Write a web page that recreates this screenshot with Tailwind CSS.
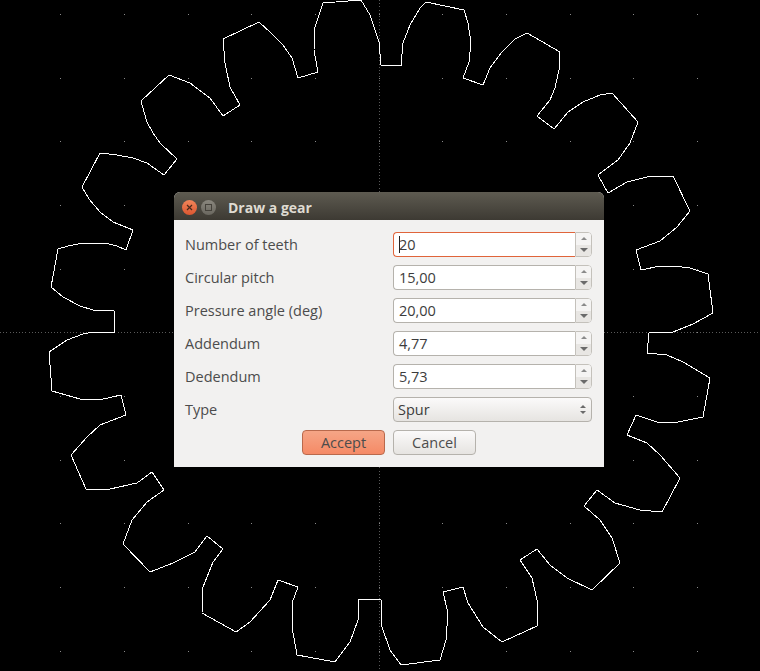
<!DOCTYPE html>
<html lang="en">
<head>
    <meta charset="UTF-8">
    <title>Draw a gear</title>
    <script src="https://cdn.jsdelivr.net/npm/@tailwindcss/browser@4"></script>
</head>
<body class="bg-black">
    <div class="relative w-[760px] h-[671px] overflow-hidden bg-black font-['Open_Sans',sans-serif]">
        <!-- CAD canvas -->
        <svg class="absolute inset-0" width="760" height="671" viewBox="0 0 760 671" fill="none" shape-rendering="crispEdges">
            <path id="grid" stroke="#8a8a8a" stroke-width="1"></path>
            <path d="M0 332.5H760" stroke="#5a5a5a" stroke-dasharray="1 2.18"></path>
            <path d="M379.5 0V671" stroke="#5a5a5a" stroke-dasharray="1 2.18"></path>
            <path stroke="#fff" stroke-width="1" d="M114 332 114 311 93 310 80 306 63 297 51 287 58 249 68 246 83 243 105 243 117 246 126 250 133 230 113 222 100 212 89 199 82 187 100 153 117 155 133 158 147 163 164 175 177 159 160 143 153 133 147 122 141 101 169 75 190 83 210 98 223 116 240 105 230 87 225 63 223 39 259 22 270 32 283 45 292 58 298 78 318 72 314 50 315 27 323 3 361 0 370 15 379 42 381 65 401 66 403 43 410 25 420 8 426 2 464 10 468 23 471 43 469 62 463 78 483 85 490 68 502 52 515 39 527 33 560 52 559 70 555 88 550 100 537 116 554 129 568 112 583 102 600 95 612 93 638 122 630 143 618 160 598 175 608 193 627 182 647 177 673 176 690 211 677 227 660 241 636 250 641 270 660 266 673 266 690 268 708 274 713 313 693 324 673 332 649 333 647 353 667 355 683 362 710 378 703 417 678 422 657 422 636 415 627 435 647 443 660 455 680 478 662 512 640 510 615 503 597 490 584 506 600 520 612 538 620 563 592 590 567 578 550 565 537 549 520 560 532 578 537 600 537 626 502 642 483 627 468 603 463 587 443 592 448 613 446 640 440 660 401 665 390 650 382 627 381 600 359 599 358 620 350 642 335 662 297 655 292 627 292 603 298 587 278 580 270 600 250 622 236 632 202 613 203 587 213 562 223 549 207 536 195 552 173 563 150 572 123 544 132 520 147 502 164 490 152 472 137 483 110 489 86 489 71 455 87 437 100 425 126 415 121 395 99 400 80 399 52 391 49 352 67 340 83 334 93 332Z"></path>
        </svg>

        <!-- Dialog -->
        <div class="absolute left-[174px] top-[192px] w-[430px] h-[275px] flex flex-col bg-[#f2f1f0] rounded-t-[6px]">
            <div class="h-[28px] flex items-center rounded-t-[6px] bg-gradient-to-b from-[#5e5b51] to-[#3d3a33]">
                <div class="ml-[8px] w-[15px] h-[15px] rounded-full flex items-center justify-center bg-gradient-to-b from-[#f2855a] to-[#dc5630] mt-[2px]">
                    <svg width="7" height="7" viewBox="0 0 7 7" fill="none"><path d="M1 1 6 6M6 1 1 6" stroke="#4a2a1c" stroke-width="1.2"></path></svg>
                </div>
                <div class="ml-[4px] w-[15px] h-[15px] rounded-full flex items-center justify-center bg-gradient-to-b from-[#8a877e] to-[#6a675f] mt-[2px]">
                    <div class="w-[7px] h-[7px] border border-[#45423b]"></div>
                </div>
                <span class="ml-[12px] mt-[2px] text-[14px] font-bold text-[#dfdbd2]">Draw a gear</span>
            </div>

            <div class="flex-1 flex flex-col gap-[8px] pt-[12px] pl-[11px] pr-[12px] text-[14.5px] text-[#4c4c4c]">
                <div class="h-[25px] flex items-center">
                    <span class="w-[208px]">Number of teeth</span>
                    <div class="flex-1 h-[25px] flex bg-white rounded-[4px]">
                        <div class="relative flex-1 flex items-center pl-[5px] rounded-l-[4px] border border-r-0 border-[#e0643a] text-[#3c3c3c]">
                            <span class="absolute left-[5px] top-[3px] w-px h-[17px] bg-[#222]"></span>20
                        </div>
                        <div class="w-[17px] flex flex-col rounded-r-[4px] overflow-hidden border border-[#c4c1bb]">
                            <div class="flex-1 flex items-center justify-center bg-[#f5f4f3]"><div class="w-0 h-0 border-x-[3px] border-x-transparent border-b-[3px] border-b-[#8a8a8a]"></div></div>
                            <div class="flex-1 flex items-center justify-center bg-[#e8e6e3]"><div class="w-0 h-0 border-x-[4px] border-x-transparent border-t-[4px] border-t-[#6a6a6a]"></div></div>
                        </div>
                    </div>
                </div>
                <div class="h-[25px] flex items-center">
                    <span class="w-[208px]">Circular pitch</span>
                    <div class="flex-1 h-[25px] flex bg-white rounded-[4px]">
                        <div class="flex-1 flex items-center pl-[5px] rounded-l-[4px] border border-r-0 border-[#b5b2ac] text-[#3c3c3c]">15,00</div>
                        <div class="w-[17px] flex flex-col rounded-r-[4px] overflow-hidden border border-[#c4c1bb]">
                            <div class="flex-1 flex items-center justify-center bg-[#f5f4f3]"><div class="w-0 h-0 border-x-[3px] border-x-transparent border-b-[3px] border-b-[#8a8a8a]"></div></div>
                            <div class="flex-1 flex items-center justify-center bg-[#e8e6e3]"><div class="w-0 h-0 border-x-[4px] border-x-transparent border-t-[4px] border-t-[#6a6a6a]"></div></div>
                        </div>
                    </div>
                </div>
                <div class="h-[25px] flex items-center">
                    <span class="w-[208px]">Pressure angle (deg)</span>
                    <div class="flex-1 h-[25px] flex bg-white rounded-[4px]">
                        <div class="flex-1 flex items-center pl-[5px] rounded-l-[4px] border border-r-0 border-[#b5b2ac] text-[#3c3c3c]">20,00</div>
                        <div class="w-[17px] flex flex-col rounded-r-[4px] overflow-hidden border border-[#c4c1bb]">
                            <div class="flex-1 flex items-center justify-center bg-[#f5f4f3]"><div class="w-0 h-0 border-x-[3px] border-x-transparent border-b-[3px] border-b-[#8a8a8a]"></div></div>
                            <div class="flex-1 flex items-center justify-center bg-[#e8e6e3]"><div class="w-0 h-0 border-x-[4px] border-x-transparent border-t-[4px] border-t-[#6a6a6a]"></div></div>
                        </div>
                    </div>
                </div>
                <div class="h-[25px] flex items-center">
                    <span class="w-[208px]">Addendum</span>
                    <div class="flex-1 h-[25px] flex bg-white rounded-[4px]">
                        <div class="flex-1 flex items-center pl-[5px] rounded-l-[4px] border border-r-0 border-[#b5b2ac] text-[#3c3c3c]">4,77</div>
                        <div class="w-[17px] flex flex-col rounded-r-[4px] overflow-hidden border border-[#c4c1bb]">
                            <div class="flex-1 flex items-center justify-center bg-[#f5f4f3]"><div class="w-0 h-0 border-x-[3px] border-x-transparent border-b-[3px] border-b-[#8a8a8a]"></div></div>
                            <div class="flex-1 flex items-center justify-center bg-[#e8e6e3]"><div class="w-0 h-0 border-x-[4px] border-x-transparent border-t-[4px] border-t-[#6a6a6a]"></div></div>
                        </div>
                    </div>
                </div>
                <div class="h-[25px] flex items-center">
                    <span class="w-[208px]">Dedendum</span>
                    <div class="flex-1 h-[25px] flex bg-white rounded-[4px]">
                        <div class="flex-1 flex items-center pl-[5px] rounded-l-[4px] border border-r-0 border-[#b5b2ac] text-[#3c3c3c]">5,73</div>
                        <div class="w-[17px] flex flex-col rounded-r-[4px] overflow-hidden border border-[#c4c1bb]">
                            <div class="flex-1 flex items-center justify-center bg-[#f5f4f3]"><div class="w-0 h-0 border-x-[3px] border-x-transparent border-b-[3px] border-b-[#8a8a8a]"></div></div>
                            <div class="flex-1 flex items-center justify-center bg-[#e8e6e3]"><div class="w-0 h-0 border-x-[4px] border-x-transparent border-t-[4px] border-t-[#6a6a6a]"></div></div>
                        </div>
                    </div>
                </div>
                <div class="h-[25px] flex items-center">
                    <span class="w-[208px]">Type</span>
                    <div class="flex-1 h-[25px] flex items-center justify-between pl-[4px] pr-[5px] rounded-[4px] border border-[#b5b2ac] bg-gradient-to-b from-[#fbfafa] to-[#e6e4e1] text-[#3c3c3c]">
                        <span>Spur</span>
                        <div class="flex flex-col gap-[3px]">
                            <div class="w-0 h-0 border-x-[3px] border-x-transparent border-b-[3px] border-b-[#6a6a6a]"></div>
                            <div class="w-0 h-0 border-x-[3px] border-x-transparent border-t-[3px] border-t-[#6a6a6a]"></div>
                        </div>
                    </div>
                </div>
                <div class="h-[25px] flex justify-end gap-[8px] pr-[116px]">
                    <div class="w-[83px] h-[25px] flex items-center justify-center rounded-[4px] border border-[#b9694c] bg-gradient-to-b from-[#f5a586] to-[#f58a66]">Accept</div>
                    <div class="w-[83px] h-[25px] flex items-center justify-center rounded-[4px] border border-[#b5b2ac] bg-gradient-to-b from-[#fbfafa] to-[#e6e4e1]">Cancel</div>
                </div>
            </div>
        </div>
    </div>

    <script>
        // Snap grid dots
        const xs = [60, 124, 188, 251, 315, 379, 442, 506, 570, 633, 697];
        const ys = [14, 78, 141, 205, 269, 332, 396, 460, 523, 587, 651];
        let d = '';
        xs.forEach(x => ys.forEach(y => { d += `M${x} ${y + 0.5}h1`; }));
        document.getElementById('grid').setAttribute('d', d);
    </script>
</body>
</html>
